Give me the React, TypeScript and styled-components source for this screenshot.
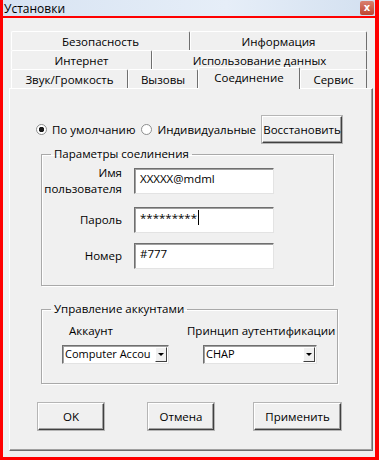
import React from "react";
import styled, { createGlobalStyle } from "styled-components";

const GlobalStyle = createGlobalStyle`
  html, body {
    margin: 0;
    padding: 0;
    background: #f0f0f0;
  }
  body {
    font-family: "Open Sans", "Liberation Sans", sans-serif;
    font-size: 11.5px;
    color: #000;
  }
`;

const Window = styled.div`
  width: 379px;
  height: 460px;
  box-sizing: border-box;
  display: flex;
  flex-direction: column;
  background: #f0f0f0;
  border-left: 3px solid #f00;
  border-right: 4px solid #f00;
  border-bottom: 3px solid #f00;
`;

const TitleBar = styled.div`
  height: 16px;
  display: flex;
  align-items: center;
  justify-content: space-between;
  padding-left: 1px;
  background: linear-gradient(90deg, #d7e3f2 0%, #e6eef8 60%, #d3e0f0 100%);
  font-size: 12px;
  border-bottom: 2px solid #f00;
`;

const CloseBtn = styled.div`
  width: 14px;
  height: 14px;
  margin-right: 1px;
  border-radius: 2px;
  background: linear-gradient(#d9806f, #c0442f);
  color: #fff;
  font-size: 10px;
  font-weight: bold;
  line-height: 13px;
  text-align: center;
  font-family: "DejaVu Sans", sans-serif;
`;

const Body = styled.div`
  flex: 1;
  display: flex;
  flex-direction: column;
  padding: 13px 2px 0 6px;
`;

const TabRow = styled.div<{ $z?: number }>`
  display: flex;
  height: 19px;
  margin-left: 2px;
  align-items: flex-end;
  position: relative;
  z-index: ${(p) => p.$z ?? 0};
`;

const Tab = styled.div<{ $w: number; $selected?: boolean }>`
  width: ${(p) => p.$w}px;
  height: ${(p) => (p.$selected ? 22 : 19)}px;
  box-sizing: border-box;
  display: flex;
  align-items: center;
  justify-content: center;
  background: #f0f0f0;
  border-top: 1px solid #fff;
  border-left: 1px solid #fff;
  border-right: 1px solid #6f6f6f;
  border-radius: 2px 2px 0 0;
  padding-bottom: ${(p) => (p.$selected ? 3 : 0)}px;
  margin-bottom: ${(p) => (p.$selected ? -1 : 0)}px;
  white-space: nowrap;
`;

const Panel = styled.div`
  height: 363px;
  box-sizing: border-box;
  border-top: 1px solid #fff;
  border-left: 1px solid #fff;
  border-right: 1px solid #6f6f6f;
  border-bottom: 1px solid #6f6f6f;
  box-shadow: inset -1px -1px 0 #a0a0a0;
  display: flex;
  flex-direction: column;
  padding: 27px 0 0 26px;
`;

const ModeRow = styled.div`
  display: flex;
  align-items: center;
  height: 27px;
`;

const Radio = styled.span<{ $checked?: boolean }>`
  width: 11px;
  height: 11px;
  box-sizing: border-box;
  border-radius: 50%;
  border: 1px solid #8e8f8f;
  background: radial-gradient(circle, ${(p) => (p.$checked ? "#1a1a1a 0 2.5px, #fff 3px" : "#fff 0, #fff 100%")});
  margin-right: 5px;
  flex-shrink: 0;
`;

const RadioLabel = styled.span`
  margin-right: 6px;
`;

const Button = styled.div<{ $w: number }>`
  width: ${(p) => p.$w}px;
  height: 27px;
  box-sizing: border-box;
  display: flex;
  align-items: center;
  justify-content: center;
  background: #f0f0f0;
  border-top: 1px solid #fff;
  border-left: 1px solid #fff;
  border-right: 1px solid #404040;
  border-bottom: 1px solid #404040;
  box-shadow: inset -1px -1px 0 #a0a0a0, 0 0 0 1px #b5b5b5;
`;

const Group = styled.fieldset<{ $w: number; $mt: number; $h: number }>`
  width: ${(p) => p.$w}px;
  height: ${(p) => p.$h}px;
  box-sizing: border-box;
  margin: ${(p) => p.$mt}px 0 0 5px;
  padding: 0;
  border: 1px solid #a9a9a9;
  box-shadow: 1px 1px 0 #fff, inset 1px 1px 0 #fff;
  min-width: 0;
`;

const Legend = styled.legend`
  margin-left: 9px;
  padding: 0 3px;
  line-height: 16px;
`;

const FieldGrid = styled.div`
  display: grid;
  grid-template-columns: 80px 140px;
  column-gap: 12px;
  row-gap: 10px;
  align-items: center;
  margin-top: 3px;
`;

const FieldLabel = styled.div`
  text-align: right;
  line-height: 16px;
`;

const Input = styled.div`
  height: 26px;
  box-sizing: border-box;
  background: #fff;
  border-top: 1px solid #6f6f6f;
  border-left: 1px solid #6f6f6f;
  border-right: 1px solid #e3e3e3;
  border-bottom: 1px solid #e3e3e3;
  box-shadow: inset 1px 1px 0 #a0a0a0;
  padding: 2px 0 0 5px;
  line-height: 16px;
  white-space: nowrap;
  overflow: hidden;
`;

const Caret = styled.span`
  display: inline-block;
  width: 1px;
  height: 15px;
  background: #000;
  vertical-align: top;
  margin-left: 1px;
`;

const AccountGrid = styled.div`
  display: grid;
  grid-template-columns: 125px 148px;
  margin: 6px 0 0 20px;
  row-gap: 6px;
`;

const SubLabel = styled.div<{ $ml: number }>`
  margin-left: ${(p) => p.$ml}px;
  line-height: 16px;
  white-space: nowrap;
`;

const Combo = styled.div<{ $w: number; $ml: number }>`
  width: ${(p) => p.$w}px;
  margin-left: ${(p) => p.$ml}px;
  height: 19px;
  box-sizing: border-box;
  display: flex;
  background: #fff;
  border-top: 1px solid #6f6f6f;
  border-left: 1px solid #6f6f6f;
  border-right: 1px solid #e3e3e3;
  border-bottom: 1px solid #e3e3e3;
  box-shadow: inset 1px 1px 0 #a0a0a0;
`;

const ComboText = styled.div`
  flex: 1;
  overflow: hidden;
  white-space: nowrap;
  padding-left: 2px;
  line-height: 16px;
  font-size: 11px;
`;

const ComboArrow = styled.div`
  width: 12px;
  margin: 1px 1px 1px 0;
  box-sizing: border-box;
  background: #f0f0f0;
  border-top: 1px solid #fff;
  border-left: 1px solid #fff;
  border-right: 1px solid #404040;
  border-bottom: 1px solid #404040;
  display: flex;
  align-items: center;
  justify-content: center;
  &::after {
    content: "";
    border-left: 3px solid transparent;
    border-right: 3px solid transparent;
    border-top: 3px solid #000;
  }
`;

const ButtonRow = styled.div`
  display: flex;
  margin: 19px 0 0 2px;
  gap: 44px;
  & > :nth-child(3) {
    margin-left: -4px;
  }
`;

export default function App() {
  return (
    <>
      <GlobalStyle />
      <Window>
        <TitleBar>
          <span>Установки</span>
          <CloseBtn>x</CloseBtn>
        </TitleBar>
        <Body>
          <TabRow>
            <Tab $w={179}>Безопасность</Tab>
            <Tab $w={177}>Информация</Tab>
          </TabRow>
          <TabRow>
            <Tab $w={141}>Интернет</Tab>
            <Tab $w={215}>Использование данных</Tab>
          </TabRow>
          <TabRow $z={2}>
            <Tab $w={117}>Звук/Громкость</Tab>
            <Tab $w={70}>Вызовы</Tab>
            <Tab $w={102} $selected>
              Соединение
            </Tab>
            <Tab $w={67}>Сервис</Tab>
          </TabRow>
          <Panel>
            <ModeRow>
              <Radio $checked />
              <RadioLabel>По умолчанию</RadioLabel>
              <Radio />
              <RadioLabel>Индивидуальные</RadioLabel>
              <Button $w={80}>Восстановить</Button>
            </ModeRow>
            <Group $w={293} $mt={3} $h={140}>
              <Legend>Параметры соелинения</Legend>
              <FieldGrid>
                <FieldLabel>
                  Имя
                  <br />
                  пользователя
                </FieldLabel>
                <Input>XXXXX@mdml</Input>
                <FieldLabel>Пароль</FieldLabel>
                <Input>
                  *********
                  <Caret />
                </Input>
                <FieldLabel>Номер</FieldLabel>
                <Input>#777</Input>
              </FieldGrid>
            </Group>
            <Group $w={297} $mt={15} $h={83}>
              <Legend>Управление аккунтами</Legend>
              <AccountGrid>
                <SubLabel $ml={7}>Аккаунт</SubLabel>
                <SubLabel $ml={0}>Принцип аутентификации</SubLabel>
                <Combo $w={107} $ml={0}>
                  <ComboText>Computer Accou</ComboText>
                  <ComboArrow />
                </Combo>
                <Combo $w={114} $ml={16}>
                  <ComboText>CHAP</ComboText>
                  <ComboArrow />
                </Combo>
              </AccountGrid>
            </Group>
            <ButtonRow>
              <Button $w={66}>OK</Button>
              <Button $w={66}>Отмена</Button>
              <Button $w={87}>Применить</Button>
            </ButtonRow>
          </Panel>
        </Body>
      </Window>
    </>
  );
}
